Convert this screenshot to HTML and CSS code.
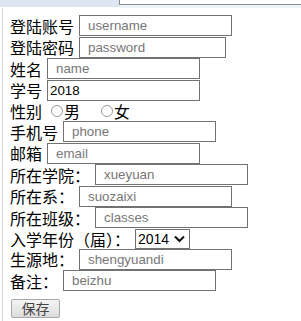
FILE: index.html
```html
<!DOCTYPE html>
<html lang="zh">
<head>
    <meta charset="UTF-8">
    <meta name="viewport" content="width=device-width, initial-scale=1.0">
    <title>学生信息</title>
    <link rel="stylesheet" href="styles.css">
</head>
<body>

<div class="tab-bar">
    <div class="tab-active"></div>
    <div class="tab-rest"></div>
</div>

<div class="panel">
    <form class="info-form">
        <div class="row"><label class="lbl">登陆账号</label><input class="field ph" type="text" placeholder="username"></div>
        <div class="row"><label class="lbl">登陆密码</label><input class="field ph pwd" type="text" placeholder="password"></div>
        <div class="row"><label class="lbl">姓名</label><input class="field ph" type="text" placeholder="name"></div>
        <div class="row"><label class="lbl">学号</label><input class="field" type="text" value="2018"></div>
        <div class="row row-short">
            <label class="lbl">性别</label>
            <span class="radio first"></span><span class="opt">男</span>
            <span class="radio"></span><span class="opt">女</span>
        </div>
        <div class="row"><label class="lbl">手机号</label><input class="field ph" type="text" placeholder="phone"></div>
        <div class="row"><label class="lbl">邮箱</label><input class="field ph" type="text" placeholder="email"></div>
        <div class="row"><label class="lbl">所在学院：</label><input class="field ph" type="text" placeholder="xueyuan"></div>
        <div class="row"><label class="lbl">所在系：</label><input class="field ph" type="text" placeholder="suozaixi"></div>
        <div class="row"><label class="lbl">所在班级：</label><input class="field ph" type="text" placeholder="classes"></div>
        <div class="row row-short">
            <label class="lbl">入学年份（届）：</label>
            <span class="select-box">2014
                <svg class="chev" width="11" height="8" viewBox="0 0 11 8"><path d="M1 1.5 L5.5 6 L10 1.5" fill="none" stroke="#111" stroke-width="2"/></svg>
            </span>
        </div>
        <div class="row"><label class="lbl">生源地：</label><input class="field ph" type="text" placeholder="shengyuandi"></div>
        <div class="row"><label class="lbl">备注：</label><input class="field ph" type="text" placeholder="beizhu"></div>
        <div class="row-btn"><button type="button" class="btn">保存</button></div>
    </form>
</div>

</body>
</html>
```

FILE: styles.css
```css
body {
    margin: 0;
    font-family: "Noto Sans CJK SC", "Liberation Sans", sans-serif;
    background-color: #fff;
    color: #000;
}

.tab-bar {
    display: flex;
    height: 8px;
}

.tab-active {
    width: 119px;
    height: 7px;
    background-color: #dde6f3;
}

.tab-rest {
    flex: 1;
    height: 4px;
    border-left: 1px solid #8a8a8a;
    border-bottom: 1px solid #8a8a8a;
    box-shadow: 0 3px 0 #eef4fa;
}

.panel {
    margin-left: 2px;
    border-left: 1px solid #d4d4d4;
    padding: 7px 0 10px 7px;
}

.row {
    display: flex;
    align-items: center;
    height: 21.5px;
}

.row-short {
    height: 20px;
}

.lbl {
    font-size: 16px;
    line-height: 16px;
    margin-right: 5px;
    white-space: nowrap;
}

.field {
    box-sizing: border-box;
    width: 153px;
    height: 21px;
    margin: 0;
    padding: 1px 2px;
    border: 1px solid #727272;
    font-family: "Liberation Sans", Arial, sans-serif;
    font-size: 13.33px;
    color: #000;
    outline: none;
}

.field.ph {
    padding-left: 8px;
}

.field.pwd {
    width: 147px;
}

.field::placeholder {
    color: #777;
}

.radio {
    display: inline-block;
    box-sizing: border-box;
    width: 12px;
    height: 12px;
    border: 1px solid #9a9a9a;
    border-radius: 50%;
    margin-left: 21px;
}

.radio.first {
    margin-left: 4px;
}

.opt {
    font-size: 16px;
    line-height: 16px;
    margin-left: 1px;
}

.select-box {
    box-sizing: border-box;
    display: flex;
    align-items: center;
    justify-content: space-between;
    width: 55px;
    height: 20px;
    padding: 0 4px 0 2px;
    border: 1px solid #727272;
    font-family: "Liberation Sans", Arial, sans-serif;
    font-size: 14px;
}

.row-btn {
    padding: 3px 0 0 1px;
}

.btn {
    box-sizing: border-box;
    width: 49px;
    height: 19px;
    padding: 0;
    border: 1px solid #a8a8a8;
    border-radius: 2px;
    background: linear-gradient(#f4f4f4, #dcdcdc);
    font-family: "Noto Sans CJK SC", sans-serif;
    font-size: 14px;
    line-height: 17px;
    color: #444;
}
```
